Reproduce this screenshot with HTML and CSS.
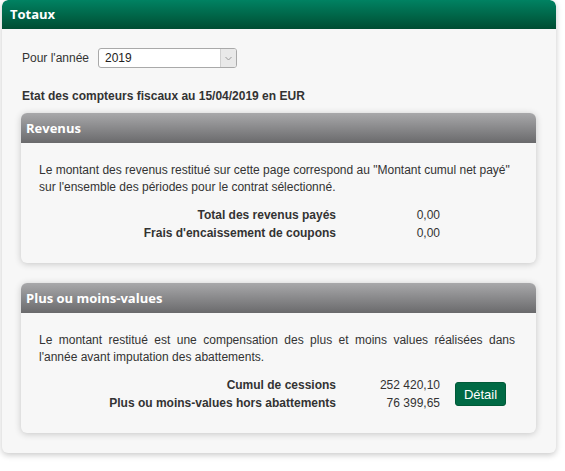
FILE: index.html
```html
<!DOCTYPE html>
<html lang="fr">
<head>
    <meta charset="UTF-8">
    <title>Totaux</title>
    <link rel="stylesheet" href="styles.css">
</head>
<body>
    <div class="panel">
        <div class="panel-head">Totaux</div>
        <div class="panel-body">
            <div class="year-row">
                <label for="annee">Pour l'année</label>
                <div class="select-wrap">
                    <select id="annee" class="select-year">
                        <option>2019</option>
                        <option>2018</option>
                        <option>2017</option>
                    </select>
                    <span class="select-arrow">
                        <svg width="7" height="5" viewBox="0 0 7 5"><path d="M0.5 1 L3.5 4 L6.5 1" fill="none" stroke="#9a9a9a" stroke-width="1"/></svg>
                    </span>
                </div>
            </div>

            <p class="state-title">Etat des compteurs fiscaux au 15/04/2019 en EUR</p>

            <div class="card">
                <div class="card-head">Revenus</div>
                <div class="card-body">
                    <p class="card-text">Le montant des revenus restitué sur cette page correspond au "Montant cumul net payé" sur l'ensemble des périodes pour le contrat sélectionné.</p>
                    <div class="totals">
                        <div class="totals-label">Total des revenus payés</div>
                        <div class="totals-value">0,00</div>
                        <div class="totals-label">Frais d'encaissement de coupons</div>
                        <div class="totals-value">0,00</div>
                    </div>
                </div>
            </div>

            <div class="card">
                <div class="card-head">Plus ou moins-values</div>
                <div class="card-body">
                    <p class="card-text justify">Le montant restitué est une compensation des plus et moins values réalisées dans l'année avant imputation des abattements.</p>
                    <div class="totals with-action">
                        <div class="totals-label">Cumul de cessions</div>
                        <div class="totals-value">252 420,10</div>
                        <div class="totals-action"><button class="btn-detail" type="button">Détail</button></div>
                        <div class="totals-label">Plus ou moins-values hors abattements</div>
                        <div class="totals-value">76 399,65</div>
                    </div>
                </div>
            </div>
        </div>
    </div>
</body>
</html>
```

FILE: styles.css
```css
body {
    margin: 0;
    background: #ffffff;
    font-family: "Liberation Sans", Arial, sans-serif;
    font-size: 12px;
    color: #333333;
}

/* Outer panel */
.panel {
    width: 554px;
    margin: 0 0 19px 2px;
    background: #f7f7f7;
    border-radius: 6px;
    box-shadow: 0 2px 6px rgba(0, 0, 0, 0.22);
    overflow: hidden;
}

.panel-head {
    height: 29px;
    line-height: 29px;
    padding: 0 8px;
    background: linear-gradient(to bottom, #008262, #004d32);
    color: #ffffff;
    font-family: "Open Sans", "Liberation Sans", sans-serif;
    font-weight: 700;
    font-size: 13px;
    border-radius: 6px 6px 0 0;
}

.panel-body {
    padding: 19px 20px 20px 19px;
}

/* Year selector */
.year-row {
    display: flex;
    align-items: center;
    height: 20px;
    padding-left: 1px;
}

.year-row label {
    margin-right: 9px;
}

.select-wrap {
    position: relative;
    width: 139px;
    height: 20px;
}

.select-year {
    appearance: none;
    -webkit-appearance: none;
    width: 100%;
    height: 20px;
    margin: 0;
    padding: 0 0 0 6px;
    border: 1px solid #a9a9a9;
    border-radius: 3px;
    background: #ffffff;
    font-family: "Liberation Sans", Arial, sans-serif;
    font-size: 12px;
    color: #222222;
}

.select-arrow {
    position: absolute;
    top: 1px;
    right: 1px;
    width: 15px;
    height: 18px;
    background: #e9e9e9;
    border-left: 1px solid #d0d0d0;
    border-radius: 0 2px 2px 0;
    display: flex;
    align-items: center;
    justify-content: center;
    pointer-events: none;
}

.state-title {
    margin: 21px 0 10px 1px;
    font-weight: 700;
    line-height: 14px;
}

/* Cards */
.card {
    width: 515px;
    margin-bottom: 20px;
    background: #f7f7f7;
    border-radius: 6px;
    box-shadow: 0 1px 7px rgba(0, 0, 0, 0.2);
    overflow: hidden;
}

.card:last-child {
    margin-bottom: 0;
}

.card-head {
    height: 30px;
    line-height: 30px;
    padding: 0 5px;
    background: linear-gradient(to bottom, #a8a8aa, #6a6a6c);
    color: #ffffff;
    font-family: "Open Sans", "Liberation Sans", sans-serif;
    font-weight: 700;
    font-size: 13px;
}

.card-body {
    padding: 19px 21px 21px 18px;
}

.card-text {
    margin: 0 0 10px;
    line-height: 17px;
}

.justify {
    text-align: justify;
}

/* Totals rows */
.totals {
    display: grid;
    grid-template-columns: 297px 104px;
    grid-auto-rows: 18px;
    align-items: center;
}

.totals.with-action {
    grid-template-columns: 297px 104px auto;
}

.totals-label {
    text-align: right;
    font-weight: 700;
}

.totals-value {
    text-align: right;
}

.totals-action {
    grid-row: span 2;
    padding-left: 15px;
}

.btn-detail {
    width: 51px;
    height: 24px;
    padding: 0;
    border: 1px solid #005a38;
    border-radius: 3px;
    background: #006a45;
    color: #ffffff;
    font-family: "Liberation Sans", Arial, sans-serif;
    font-size: 13px;
    cursor: pointer;
}
```
